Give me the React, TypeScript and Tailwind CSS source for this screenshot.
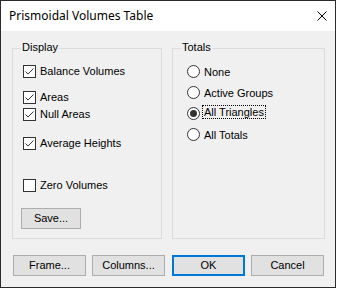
import React from "react";

const font = { fontFamily: '"Liberation Sans", Arial, sans-serif' };

function Check({ checked }: { checked: boolean }) {
  return (
    <span className="w-[13px] h-[13px] border border-[#333333] bg-white shrink-0 flex items-center justify-center">
      {checked && (
        <svg width="11" height="11" viewBox="0 0 11 11">
          <path d="M1.5 5.5 L4 8 L9.5 2.5" stroke="#333333" strokeWidth="1" fill="none" />
        </svg>
      )}
    </span>
  );
}

function CheckRow({ label, checked, className }: { label: string; checked: boolean; className?: string }) {
  return (
    <div className={"flex items-center h-[13px] " + (className ?? "")}>
      <Check checked={checked} />
      <span className="ml-[4px] text-[11px] leading-[13px] text-black">{label}</span>
    </div>
  );
}

function Radio({ label, checked, focus, className }: { label: string; checked?: boolean; focus?: boolean; className?: string }) {
  return (
    <div className={"flex items-center h-[13px] " + (className ?? "")}>
      <span className="w-[13px] h-[13px] rounded-full border border-[#333333] bg-white shrink-0 flex items-center justify-center">
        {checked && <span className="w-[7px] h-[7px] rounded-full bg-[#333333]" />}
      </span>
      <span
        className={
          "ml-[2px] text-[11px] leading-[12px] text-black px-[1px] " +
          (focus ? "border border-dotted border-black -mt-[3px]" : "border border-transparent")
        }
      >
        {label}
      </span>
    </div>
  );
}

function Btn({ label, primary, className }: { label: string; primary?: boolean; className?: string }) {
  return (
    <div
      className={
        "h-[21px] flex items-center justify-center bg-[#e1e1e1] text-[11px] text-black " +
        (primary ? "border-2 border-[#0078d7]" : "border border-[#adadad]") +
        " " +
        (className ?? "")
      }
    >
      {label}
    </div>
  );
}

export default function App() {
  return (
    <div className="w-[337px] h-[289px] bg-white" style={font}>
      <div className="w-[336px] h-[288px] border border-[#2b2b2b] flex flex-col bg-[#f0f0f0]">
        <div className="h-[30px] bg-white flex items-center justify-between pl-[8px] pr-[8px] shrink-0">
          <span className="text-[12px] text-black" style={{ fontFamily: '"Noto Sans", "Open Sans", sans-serif' }}>
            Prismoidal Volumes Table
          </span>
          <svg width="10" height="10" viewBox="0 0 10 10" className="mb-[1px]">
            <path d="M0.5 0.5 L9.5 9.5 M9.5 0.5 L0.5 9.5" stroke="#000" strokeWidth="1" />
          </svg>
        </div>
        <div className="flex flex-col pl-[11px] pr-[10px] pt-[17px]">
          <div className="flex">
            <div className="relative w-[150px] h-[191px] border border-[#dcdcdc]">
              <span className="absolute left-[8px] -top-[8px] px-[1px] bg-[#f0f0f0] text-[11px] leading-[13px] text-black">
                Display
              </span>
              <div className="flex flex-col pl-[10px] pt-[16px]">
                <CheckRow label="Balance Volumes" checked />
                <CheckRow label="Areas" checked className="mt-[13px]" />
                <CheckRow label="Null Areas" checked className="mt-[4px]" />
                <CheckRow label="Average Heights" checked className="mt-[16px]" />
                <CheckRow label="Zero Volumes" checked={false} className="mt-[29px]" />
                <Btn label="Save..." className="w-[60px] mt-[16px] -ml-[2px]" />
              </div>
            </div>
            <div className="relative w-[153px] h-[191px] border border-[#dcdcdc] ml-[10px]">
              <span className="absolute left-[8px] -top-[8px] px-[1px] bg-[#f0f0f0] text-[11px] leading-[13px] text-black">
                Totals
              </span>
              <div className="flex flex-col pl-[14px] pt-[16px]">
                <Radio label="None" />
                <Radio label="Active Groups" className="mt-[8px]" />
                <Radio label="All Triangles" checked focus className="mt-[8px]" />
                <Radio label="All Totals" className="mt-[8px]" />
              </div>
            </div>
          </div>
          <div className="flex mt-[16px] pl-[1px]">
            <Btn label="Frame..." className="w-[73px]" />
            <Btn label="Columns..." className="w-[73px] ml-[6px]" />
            <Btn label="OK" primary className="w-[73px] ml-[7px]" />
            <Btn label="Cancel" className="w-[73px] ml-[6px]" />
          </div>
        </div>
      </div>
    </div>
  );
}
